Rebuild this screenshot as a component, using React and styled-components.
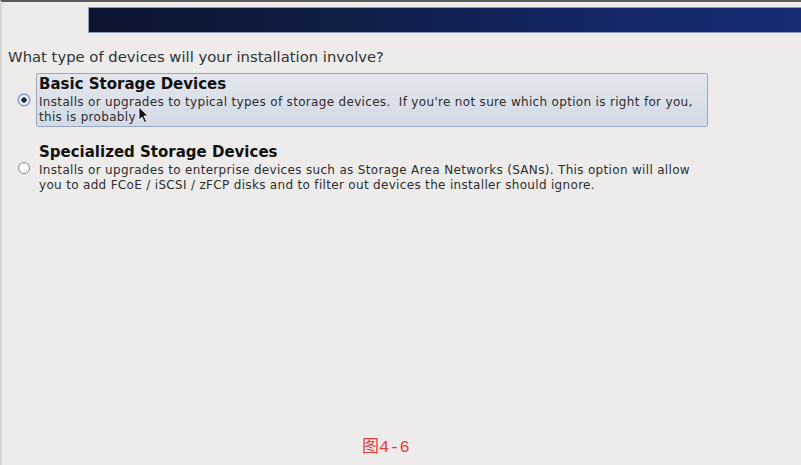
import React from 'react';
import styled, { createGlobalStyle } from 'styled-components';

const Global = createGlobalStyle`
  html, body { margin: 0; padding: 0; background: #edecea; }
  body { font-family: "DejaVu Sans", "Liberation Sans", sans-serif; }
`;

const Screen = styled.div`
  position: relative;
  width: 801px;
  height: 465px;
  box-sizing: border-box;
  background: #edecea;
  border-top: 2px solid #5a5a5a;
  border-left: 2px solid #d6d5d3;
  overflow: hidden;
`;

const Header = styled.div`
  display: flex;
  justify-content: flex-end;
  padding-top: 5px;
`;

const Banner = styled.div`
  width: 713px;
  height: 26px;
  box-sizing: border-box;
  border: 1px solid #8e9bb6;
  border-right: none;
  background: linear-gradient(90deg, #0c1530 0%, #101d45 35%, #14286a 75%, #162d72 100%);
`;

const Question = styled.div`
  margin: 15px 0 0 6px;
  font-size: 14.8px;
  color: #2e3436;
  line-height: 18px;
`;

const Options = styled.div`
  display: flex;
  flex-direction: column;
  gap: 14px;
  margin-top: 7px;
  padding-left: 16px;
`;

const Option = styled.label`
  display: flex;
  align-items: center;
  gap: 6px;
`;

const Radio = styled.span`
  width: 12px;
  height: 12px;
  flex: none;
  border-radius: 50%;
  box-sizing: border-box;
  border: 1px solid ${({ checked }) => (checked ? '#6f89b3' : '#8a8a8a')};
  background: ${({ checked }) =>
    checked ? 'radial-gradient(circle, #1e2d4a 0 2.4px, #f4f6fa 3px)' : '#fbfbfb'};
  box-shadow: ${({ checked }) => (checked ? '0 0 0 1px #b5c6e2' : 'none')};
`;

const Card = styled.div`
  width: ${({ selected }) => (selected ? '672px' : 'auto')};
  box-sizing: border-box;
  padding: 1px 2px 1px 2px;
  border: 1px solid ${({ selected }) => (selected ? '#97a8c4' : 'transparent')};
  border-radius: 2px;
  background: ${({ selected }) =>
    selected ? 'linear-gradient(180deg, #e3e6ed 0%, #d3dae6 100%)' : 'transparent'};
`;

const Title = styled.div`
  font-weight: bold;
  font-size: 15px;
  line-height: 18px;
  color: #111;
`;

const Desc = styled.div`
  margin-top: 2px;
  font-size: 12px;
  letter-spacing: 0.32px;
  line-height: 15px;
  color: #2e2e2e;
  white-space: pre-wrap;
`;

const Caption = styled.div`
  position: absolute;
  left: 360px;
  top: 430px;
  font-family: "Liberation Mono", "Noto Sans CJK SC", monospace;
  font-size: 17px;
  color: #e53e3e;
`;

const Cursor = styled.svg`
  position: absolute;
  left: 136px;
  top: 104px;
`;

const options = [
  {
    title: 'Basic Storage Devices',
    desc: "Installs or upgrades to typical types of storage devices.  If you're not sure which option is right for you,\nthis is probably",
    selected: true,
  },
  {
    title: 'Specialized Storage Devices',
    desc: 'Installs or upgrades to enterprise devices such as Storage Area Networks (SANs). This option will allow\nyou to add FCoE / iSCSI / zFCP disks and to filter out devices the installer should ignore.',
    selected: false,
  },
];

export default function App() {
  return (
    <Screen>
      <Global />
      <Header>
        <Banner />
      </Header>
      <Question>What type of devices will your installation involve?</Question>
      <Options>
        {options.map((o) => (
          <Option key={o.title}>
            <Radio checked={o.selected} />
            <Card selected={o.selected}>
              <Title>{o.title}</Title>
              <Desc>{o.desc}</Desc>
            </Card>
          </Option>
        ))}
      </Options>
      <Cursor width="12" height="18" viewBox="0 0 12 18">
        <path d="M1 1 L1 14 L4 11 L6.5 16.5 L8.5 15.5 L6 10 L10 10 Z" fill="#111" stroke="#fff" strokeWidth="0.8" />
      </Cursor>
      <Caption>图4-6</Caption>
    </Screen>
  );
}
